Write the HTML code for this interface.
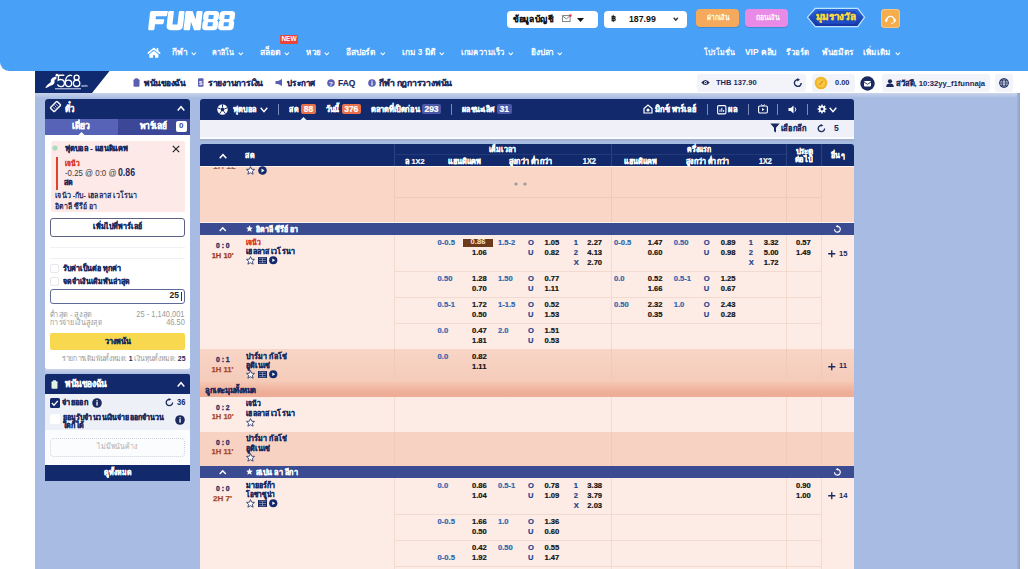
<!DOCTYPE html>
<html><head><meta charset="utf-8"><style>
html,body{margin:0;padding:0;background:#fff;width:1028px;height:569px;overflow:hidden;position:relative;font-family:"Liberation Sans",sans-serif}
body>div,body>svg{position:absolute}
svg{overflow:visible}
</style></head><body>
<div style="left:0px;top:0px;width:1028px;height:70.6px;background:#49a1f7;border-radius:0 0 0 9px"></div>
<svg style="left:148px;top:10.8px" width="90" height="19.5" viewBox="0 0 90 19.5"><g transform="translate(2.2 0) skewX(-6.5)" fill="#fff"><path d="M1.5 0 H17 Q18 0 17.8 1 L17.3 4.3 Q17.1 5.3 16 5.3 H6.3 V8.3 H14.3 Q15.3 8.3 15.1 9.3 L14.7 12.3 Q14.5 13.3 13.5 13.3 H6.3 V17.8 Q6.3 19.2 5 19.2 H1.3 Q0 19.2 0 17.8 V1.5 Q0 0 1.5 0 Z"/><path d="M19.3 0 H22.8 Q23.8 0 23.8 1.2 V13.6 H28.8 V1.2 Q28.8 0 30 0 H33.3 Q34.5 0 34.5 1.2 V14.5 Q34.5 19.2 29.8 19.2 H23.8 Q18.1 19.2 18.1 14.5 V1.2 Q18.1 0 19.3 0 Z"/><path d="M36.6 0 H42.4 L46.4 8.5 V1.2 Q46.4 0 47.6 0 H51.3 Q52.5 0 52.5 1.2 V18 Q52.5 19.2 51.3 19.2 H46 L42 10.8 V18 Q42 19.2 40.8 19.2 H36.6 Q35.4 19.2 35.4 18 V1.2 Q35.4 0 36.6 0 Z"/><path fill-rule="evenodd" d="M57.5 0 H65.5 Q69.3 0 69.3 3.8 V7.3 Q69.3 9.3 67.8 9.6 Q69.3 9.9 69.3 11.9 V15.4 Q69.3 19.2 65.5 19.2 H57.5 Q53.7 19.2 53.7 15.4 V11.9 Q53.7 9.9 55.2 9.6 Q53.7 9.3 53.7 7.3 V3.8 Q53.7 0 57.5 0 Z M59 3.9 H64 V7.9 H59 Z M59 11.3 H64 V15.3 H59 Z"/><path fill-rule="evenodd" d="M73.5 0 H81.5 Q85.3 0 85.3 3.8 V7.3 Q85.3 9.3 83.8 9.6 Q85.3 9.9 85.3 11.9 V15.4 Q85.3 19.2 81.5 19.2 H73.5 Q69.7 19.2 69.7 15.4 V11.9 Q69.7 9.9 71.2 9.6 Q69.7 9.3 69.7 7.3 V3.8 Q69.7 0 73.5 0 Z M75 3.9 H80 V7.9 H75 Z M75 11.3 H80 V15.3 H75 Z"/></g></svg>
<div style="left:507px;top:11px;width:91px;height:17px;background:#fff;border-radius:4px"></div>
<div style="left:513.2px;top:13.55px;font-size:9px;line-height:11.70px;color:#111;font-weight:bold;white-space:nowrap;-webkit-text-stroke:0.1px currentColor;"><span id="t0" style="display:inline-block;transform:scale(0.937,0.981);transform-origin:left center;">ข้อมูลบัญชี</span></div>
<svg style="left:562px;top:14px" width="10" height="9" viewBox="0 0 10 9"><rect x="0.6" y="1.6" width="7.5" height="6" fill="none" stroke="#777" stroke-width="0.9"/><path d="M0.8 2 L4.3 5 L7.8 2" fill="none" stroke="#777" stroke-width="0.9"/><circle cx="8.4" cy="1.5" r="1.3" fill="#e33"/></svg>
<svg style="left:577px;top:17.5px" width="7" height="4" viewBox="0 0 7 4"><path d="M0 0 L7 0 L3.5 4 Z" fill="#111"/></svg>
<div style="left:604px;top:11px;width:83px;height:17px;background:#fff;border-radius:4px"></div>
<div style="left:611.3px;top:14.20px;font-size:8px;line-height:10.40px;color:#111;font-weight:bold;white-space:nowrap;"><span id="t1" style="">฿</span></div>
<div style="left:628.8px;top:13.55px;font-size:9px;line-height:11.70px;color:#111;font-weight:bold;white-space:nowrap;"><span id="t2" style="display:inline-block;transform:scale(0.973,1.0);transform-origin:left center;">187.99</span></div>
<svg style="left:672.8px;top:17.3px" width="5.5" height="3.6" viewBox="0 0 5.5 3.6"><path d="M0.7 0.7 L2.75 3.2 L4.8 0.7" fill="none" stroke="#333" stroke-width="1.4"/></svg>
<div style="left:696px;top:9px;width:43px;height:18px;background:#f4a95d;border-radius:4px;box-shadow:0 1px 1px rgba(0,0,0,.15)"></div>
<div style="left:567.6px;width:300px;text-align:center;top:12.80px;font-size:8px;line-height:10.40px;color:#fff;font-weight:bold;white-space:nowrap;"><span id="t3" style="display:inline-block;transform:scale(0.835,0.947);transform-origin:center center;">ฝากเงิน</span></div>
<div style="left:745px;top:9px;width:43px;height:18px;background:#e88ae6;border-radius:4px;box-shadow:0 1px 1px rgba(0,0,0,.15)"></div>
<div style="left:617px;width:300px;text-align:center;top:12.80px;font-size:8px;line-height:10.40px;color:#fff;font-weight:bold;white-space:nowrap;"><span id="t4" style="display:inline-block;transform:scale(0.870,0.959);transform-origin:center center;">ถอนเงิน</span></div>
<svg style="left:806px;top:7px" width="60" height="21" viewBox="0 0 60 21"><defs><linearGradient id="rg" x1="0" y1="0" x2="0" y2="1"><stop offset="0" stop-color="#2a6be0"/><stop offset="1" stop-color="#1532a0"/></linearGradient></defs><path d="M9 0.7 L52 0.7 L59.3 10.3 L52 20.3 L9 20.3 L0.7 10.3 Z" fill="#bfe6ff"/><path d="M9.6 1.9 L51.4 1.9 L57.8 10.3 L51.4 19.1 L9.6 19.1 L2.2 10.3 Z" fill="url(#rg)"/><path d="M12 4 L49 4 L53 10.3 L49 16.8 L12 16.8 L7 10.3 Z" fill="#1e4cc4"/></svg>
<div style="left:686.3px;width:300px;text-align:center;top:11.12px;font-size:9.5px;line-height:12.35px;color:#f4d84e;font-weight:bold;white-space:nowrap;-webkit-text-stroke:0.25px currentColor;text-shadow:0 0 1px #5a3d00"><span id="t5" style="display:inline-block;transform:scale(1.053,1.0);transform-origin:center center;">มุมรางวัล</span></div>
<div style="left:881.2px;top:9.1px;width:18.5px;height:19px;background:#f5ad4e;border-radius:4px;box-shadow:inset 0 0 0 1px #f9c57e"></div>
<svg style="left:884px;top:12px" width="13" height="13" viewBox="0 0 13 13"><path d="M2.6 8.2 A3.9 3.9 0 1 1 10.4 8.2" fill="none" stroke="#fff" stroke-width="1.3"/><rect x="1.3" y="6.8" width="2" height="3.2" rx="0.8" fill="#fff"/><rect x="9.7" y="6.8" width="2" height="3.2" rx="0.8" fill="#fff"/><path d="M10.6 9.8 Q10.2 11.4 7 11.4" fill="none" stroke="#fff" stroke-width="0.9"/></svg>
<svg style="left:147px;top:47px" width="14" height="12" viewBox="0 0 14 12"><path d="M1.2 6.1 L6.8 1.5 L12.7 6.1" fill="none" stroke="#fff" stroke-width="1.6" stroke-linecap="round" stroke-linejoin="round"/><rect x="9.8" y="1" width="1.5" height="3" fill="#fff"/><path d="M2.3 7.3 L6.8 3.7 L11.4 7.3 V10.7 H8 V8.2 H6 V10.7 H2.3 Z" fill="#fff"/></svg>
<div style="left:172px;top:47.41px;font-size:8.6px;line-height:11.18px;color:#fff;font-weight:bold;white-space:nowrap;"><span id="t6" style="display:inline-block;transform:scale(0.981,0.994);transform-origin:left center;">กีฬา</span></div>
<svg style="left:191px;top:51.6px" width="5.6" height="3.2" viewBox="0 0 5.6 3.2"><path d="M0.7 0.7 L2.8 2.8000000000000003 L4.8999999999999995 0.7" fill="none" stroke="#fff" stroke-width="1.1"/></svg>
<div style="left:212.4px;top:47.41px;font-size:8.6px;line-height:11.18px;color:#fff;font-weight:bold;white-space:nowrap;"><span id="t7" style="display:inline-block;transform:scale(0.826,0.944);transform-origin:left center;">คาสิโน</span></div>
<svg style="left:238.2px;top:51.6px" width="5.6" height="3.2" viewBox="0 0 5.6 3.2"><path d="M0.7 0.7 L2.8 2.8000000000000003 L4.8999999999999995 0.7" fill="none" stroke="#fff" stroke-width="1.1"/></svg>
<div style="left:259.6px;top:47.41px;font-size:8.6px;line-height:11.18px;color:#fff;font-weight:bold;white-space:nowrap;"><span id="t8" style="">สล็อต</span></div>
<svg style="left:284.4px;top:51.6px" width="5.6" height="3.2" viewBox="0 0 5.6 3.2"><path d="M0.7 0.7 L2.8 2.8000000000000003 L4.8999999999999995 0.7" fill="none" stroke="#fff" stroke-width="1.1"/></svg>
<div style="left:305.8px;top:47.41px;font-size:8.6px;line-height:11.18px;color:#fff;font-weight:bold;white-space:nowrap;"><span id="t9" style="display:inline-block;transform:scale(0.925,0.977);transform-origin:left center;">หวย</span></div>
<svg style="left:324.4px;top:51.6px" width="5.6" height="3.2" viewBox="0 0 5.6 3.2"><path d="M0.7 0.7 L2.8 2.8000000000000003 L4.8999999999999995 0.7" fill="none" stroke="#fff" stroke-width="1.1"/></svg>
<div style="left:345.8px;top:47.41px;font-size:8.6px;line-height:11.18px;color:#fff;font-weight:bold;white-space:nowrap;"><span id="t10" style="display:inline-block;transform:scale(0.974,0.992);transform-origin:left center;">อีสปอร์ต</span></div>
<svg style="left:379.9px;top:51.6px" width="5.6" height="3.2" viewBox="0 0 5.6 3.2"><path d="M0.7 0.7 L2.8 2.8000000000000003 L4.8999999999999995 0.7" fill="none" stroke="#fff" stroke-width="1.1"/></svg>
<div style="left:402px;top:47.41px;font-size:8.6px;line-height:11.18px;color:#fff;font-weight:bold;white-space:nowrap;"><span id="t11" style="display:inline-block;transform:scale(0.956,0.987);transform-origin:left center;">เกม 3 มิติ</span></div>
<svg style="left:439.2px;top:51.6px" width="5.6" height="3.2" viewBox="0 0 5.6 3.2"><path d="M0.7 0.7 L2.8 2.8000000000000003 L4.8999999999999995 0.7" fill="none" stroke="#fff" stroke-width="1.1"/></svg>
<div style="left:461px;top:47.41px;font-size:8.6px;line-height:11.18px;color:#fff;font-weight:bold;white-space:nowrap;"><span id="t12" style="display:inline-block;transform:scale(0.892,0.966);transform-origin:left center;">เกมความเร็ว</span></div>
<svg style="left:508.2px;top:51.6px" width="5.6" height="3.2" viewBox="0 0 5.6 3.2"><path d="M0.7 0.7 L2.8 2.8000000000000003 L4.8999999999999995 0.7" fill="none" stroke="#fff" stroke-width="1.1"/></svg>
<div style="left:530.7px;top:47.41px;font-size:8.6px;line-height:11.18px;color:#fff;font-weight:bold;white-space:nowrap;"><span id="t13" style="display:inline-block;transform:scale(0.971,0.991);transform-origin:left center;">ยิงปลา</span></div>
<svg style="left:557px;top:51.6px" width="5.6" height="3.2" viewBox="0 0 5.6 3.2"><path d="M0.7 0.7 L2.8 2.8000000000000003 L4.8999999999999995 0.7" fill="none" stroke="#fff" stroke-width="1.1"/></svg>
<div style="left:280px;top:35px;width:18px;height:9px;background:#e8463c;border-radius:1px"></div>
<div style="left:139px;width:300px;text-align:center;top:35.48px;font-size:6.5px;line-height:8.45px;color:#fff;font-weight:bold;white-space:nowrap;"><span id="t14" style="">NEW</span></div>
<div style="left:704px;top:47.41px;font-size:8.6px;line-height:11.18px;color:#fff;font-weight:bold;white-space:nowrap;"><span id="t15" style="display:inline-block;transform:scale(0.816,0.941);transform-origin:left center;">โปรโมชั่น</span></div>
<div style="left:744.6px;top:47.41px;font-size:8.6px;line-height:11.18px;color:#fff;font-weight:bold;white-space:nowrap;"><span id="t16" style="display:inline-block;transform:scale(0.978,0.993);transform-origin:left center;">VIP คลับ</span></div>
<div style="left:786px;top:47.41px;font-size:8.6px;line-height:11.18px;color:#fff;font-weight:bold;white-space:nowrap;"><span id="t17" style="display:inline-block;transform:scale(0.904,0.97);transform-origin:left center;">รีวอร์ด</span></div>
<div style="left:821.7px;top:47.41px;font-size:8.6px;line-height:11.18px;color:#fff;font-weight:bold;white-space:nowrap;"><span id="t18" style="display:inline-block;transform:scale(0.944,0.983);transform-origin:left center;">พันธมิตร</span></div>
<div style="left:863.4px;top:47.41px;font-size:8.6px;line-height:11.18px;color:#fff;font-weight:bold;white-space:nowrap;"><span id="t19" style="display:inline-block;transform:scale(0.920,0.975);transform-origin:left center;">เพิ่มเติม</span></div>
<svg style="left:894.5px;top:51.6px" width="5.6" height="3.2" viewBox="0 0 5.6 3.2"><path d="M0.7 0.7 L2.8 2.8000000000000003 L4.8999999999999995 0.7" fill="none" stroke="#fff" stroke-width="1.1"/></svg>
<div style="left:35px;top:71px;width:984px;height:22px;background:#fff;"></div>
<svg style="left:35px;top:71px" width="75" height="22" viewBox="0 0 75 22"><path d="M0 0 L74.5 0 L57 22 L0 22 Z" fill="#0f2a6e"/></svg>
<svg style="left:44px;top:73px" width="50" height="18" viewBox="0 0 50 18"><path d="M1.2 14.8 Q3.5 11.2 6.8 9 Q6 6.5 8.5 4.8 L11.8 3.4 Q13.3 4.4 12.2 6 L10.6 7 Q11.2 9.8 9 11.8 Q6 12.8 2.8 14.8 Z" fill="#fff"/><circle cx="12.9" cy="2.2" r="1.35" fill="#fff"/><g fill="none" stroke="#fff" stroke-width="1.35" stroke-linecap="round"><path d="M19.8 2.2 H14.8 L14.2 7.2 Q15.6 6.3 17 6.5 Q20.4 6.9 20.4 10.1 Q20.4 13.6 17 13.6 Q14.6 13.6 13.7 11.9"/><path d="M27.6 2.6 Q25.8 1.9 24.3 2.8 Q21.3 4.8 21.3 9.8 Q21.3 13.6 24.5 13.6 Q27.7 13.6 27.7 10.3 Q27.7 7.1 24.5 7.1 Q22.1 7.1 21.4 9"/><circle cx="32.6" cy="4.6" r="2.5"/><circle cx="32.6" cy="10.3" r="3.2"/></g><text x="37.3" y="13.6" font-family="Liberation Sans" font-size="4.3" fill="#fff">win</text><rect x="11" y="15.2" width="26" height="1.1" fill="#c9d0e6"/></svg>
<svg style="left:133px;top:78px" width="7" height="9" viewBox="0 0 7 9"><rect x="0.5" y="1.2" width="6" height="7.5" rx="1" fill="#5b5fb4"/><rect x="2" y="0.3" width="3" height="1.8" fill="#5b5fb4"/></svg>
<div style="left:143.5px;top:77.65px;font-size:9px;line-height:11.70px;color:#1b2a5e;font-weight:bold;white-space:nowrap;-webkit-text-stroke:0.15px currentColor;"><span id="t20" style="display:inline-block;transform:scale(0.922,0.976);transform-origin:left center;">พนันของฉัน</span></div>
<svg style="left:198px;top:78px" width="6" height="9" viewBox="0 0 6 9"><rect x="0" y="0.3" width="5.5" height="8.4" rx="1" fill="#5b5fb4"/><text x="2.75" y="7" font-size="6" fill="#fff" text-anchor="middle" font-family="Liberation Sans" font-weight="bold">$</text></svg>
<div style="left:208px;top:77.65px;font-size:9px;line-height:11.70px;color:#1b2a5e;font-weight:bold;white-space:nowrap;-webkit-text-stroke:0.15px currentColor;"><span id="t21" style="display:inline-block;transform:scale(0.948,0.984);transform-origin:left center;">รายงานการเงิน</span></div>
<svg style="left:275px;top:79px" width="9" height="7" viewBox="0 0 9 7"><path d="M0.5 2 L3 2 L7 0 L7 7 L3 5 L0.5 5 Z" fill="#5b5fb4"/></svg>
<div style="left:286.5px;top:77.65px;font-size:9px;line-height:11.70px;color:#1b2a5e;font-weight:bold;white-space:nowrap;-webkit-text-stroke:0.15px currentColor;"><span id="t22" style="display:inline-block;transform:scale(0.881,0.963);transform-origin:left center;">ประกาศ</span></div>
<svg style="left:327px;top:79px" width="8" height="8" viewBox="0 0 8 8"><circle cx="4" cy="4" r="3.8" fill="#5b5fb4"/><text x="4" y="6.6" font-size="6.2" fill="#fff" text-anchor="middle" font-family="Liberation Sans" font-weight="bold">?</text></svg>
<div style="left:338.4px;top:78.11px;font-size:8.3px;line-height:10.79px;color:#1b2a5e;font-weight:bold;white-space:nowrap;-webkit-text-stroke:0.15px currentColor;"><span id="t23" style="display:inline-block;transform:scale(1.014,1.0);transform-origin:left center;">FAQ</span></div>
<svg style="left:368px;top:79px" width="8" height="8" viewBox="0 0 8 8"><circle cx="4" cy="4" r="3.8" fill="#5b5fb4"/><rect x="3.4" y="3.2" width="1.2" height="3.2" fill="#fff"/><rect x="3.4" y="1.6" width="1.2" height="1.1" fill="#fff"/></svg>
<div style="left:378.9px;top:77.65px;font-size:9px;line-height:11.70px;color:#1b2a5e;font-weight:bold;white-space:nowrap;-webkit-text-stroke:0.15px currentColor;"><span id="t24" style="display:inline-block;transform:scale(0.955,0.986);transform-origin:left center;">กีฬา กฎการวางพนัน</span></div>
<div style="left:697px;top:74px;width:109px;height:17.5px;background:#f3f4fa;border-radius:3px"></div>
<svg style="left:701px;top:79px" width="9" height="7" viewBox="0 0 9 7"><path d="M0.3 3.5 Q4.5 -1.5 8.7 3.5 Q4.5 8.5 0.3 3.5 Z" fill="#1b2a5e"/><circle cx="4.5" cy="3.5" r="1.5" fill="#fff"/><circle cx="4.5" cy="3.5" r="0.8" fill="#1b2a5e"/></svg>
<div style="left:716.4px;top:77.60px;font-size:8px;line-height:10.40px;color:#1b2a5e;font-weight:bold;white-space:nowrap;"><span id="t25" style="display:inline-block;transform:scale(0.941,1.0);transform-origin:left center;">THB 137.90</span></div>
<svg style="left:793px;top:78px" width="10" height="10" viewBox="0 0 10 10"><path d="M8.2 5 A3.4 3.4 0 1 1 5 1.6" fill="none" stroke="#1b2a5e" stroke-width="1.4"/><path d="M4.2 0 L7 1.7 L4.2 3.4 Z" fill="#1b2a5e"/></svg>
<div style="left:812px;top:74px;width:43px;height:17.5px;background:#f3f4fa;border-radius:3px"></div>
<svg style="left:814px;top:76px" width="14" height="14" viewBox="0 0 14 14"><circle cx="7" cy="7" r="6.3" fill="#f1b526"/><circle cx="7" cy="7" r="4.2" fill="#f7c846"/><path d="M5 9 L9 5" stroke="#e39a10" stroke-width="1.2"/></svg>
<div style="left:835px;top:77.60px;font-size:8px;line-height:10.40px;color:#1b2a5e;font-weight:bold;white-space:nowrap;"><span id="t26" style="display:inline-block;transform:scale(0.931,1.0);transform-origin:left center;">0.00</span></div>
<svg style="left:860px;top:76px" width="15" height="15" viewBox="0 0 15 15"><circle cx="7.5" cy="7.5" r="7.2" fill="#1b2a5e"/><rect x="4" y="5" width="7" height="5.5" rx="1" fill="#fff"/><path d="M4 6 L7.5 8.3 L11 6" fill="none" stroke="#1b2a5e" stroke-width="0.9"/></svg>
<div style="left:882px;top:74px;width:108px;height:17.5px;background:#f3f4fa;border-radius:3px"></div>
<svg style="left:886px;top:78.5px" width="8" height="8" viewBox="0 0 8 8"><circle cx="4" cy="2.3" r="2.1" fill="#1b2a5e"/><path d="M0.2 8 Q0.2 4.6 4 4.6 Q7.8 4.6 7.8 8 Z" fill="#1b2a5e"/></svg>
<div style="left:896px;top:77.61px;font-size:8.3px;line-height:10.79px;color:#1b2a5e;font-weight:bold;white-space:nowrap;-webkit-text-stroke:0.05px currentColor;"><span id="t27" style="display:inline-block;transform:scale(0.922,0.976);transform-origin:left center;">สวัสดี, 10:32yy_f1funnaja</span></div>
<div style="left:995px;top:74px;width:18px;height:17.5px;background:#f3f4fa;border-radius:3px"></div>
<svg style="left:999px;top:78px" width="10" height="10" viewBox="0 0 10 10"><circle cx="5" cy="5" r="4.3" fill="none" stroke="#1b2a5e" stroke-width="1.1"/><ellipse cx="5" cy="5" rx="2" ry="4.3" fill="none" stroke="#1b2a5e" stroke-width="0.9"/><path d="M0.7 5 L9.3 5 M1.5 2.8 L8.5 2.8 M1.5 7.2 L8.5 7.2" stroke="#1b2a5e" stroke-width="0.8"/></svg>
<div style="left:35px;top:93px;width:985px;height:476px;background:#a8bbe2;"></div>
<div style="left:35px;top:93px;width:985px;height:5px;background:#c8d2e8;background:linear-gradient(#c9d4ea,#a9bce3)"></div>
<div style="left:1016.5px;top:93px;width:3.5px;height:476px;background:#93a7cf;background:linear-gradient(90deg,#a3b5da,#8d9fc2)"></div>
<div style="left:45px;top:98.5px;width:145px;height:270px;background:#fff;border-radius:3px 3px 2px 2px"></div>
<div style="left:45px;top:98.5px;width:145px;height:20px;background:#122a6b;border-radius:3px 3px 0 0"></div>
<svg style="left:49.5px;top:101px" width="11" height="11" viewBox="0 0 11 11"><g transform="rotate(45 5.5 5.5)"><rect x="2.7" y="0.8" width="5.6" height="9.4" rx="0.8" fill="none" stroke="#fff" stroke-width="1.4"/><path d="M4.3 3.5 L6.7 3.5 M4.3 5.5 L6.7 5.5 M4.3 7.5 L6.7 7.5" stroke="#fff" stroke-width="0.7"/></g></svg>
<div style="left:65px;top:101.67px;font-size:10.5px;line-height:13.65px;color:#fff;font-weight:bold;white-space:nowrap;-webkit-text-stroke:0.25px currentColor;"><span id="t28" style="display:inline-block;transform:scale(0.746,0.916);transform-origin:left center;">ตั๋ว</span></div>
<svg style="left:177px;top:106px" width="8" height="4.6" viewBox="0 0 8 4.6"><path d="M0.7 4.3999999999999995 L4.0 0.7 L7.3 4.3999999999999995" fill="none" stroke="#fff" stroke-width="1.5"/></svg>
<div style="left:45px;top:118.5px;width:73px;height:16px;background:#5663b6;"></div>
<div style="left:118px;top:118.5px;width:72px;height:16px;background:#3c4897;"></div>
<div style="left:-69.15px;width:300px;text-align:center;top:120.33px;font-size:9.5px;line-height:12.35px;color:#fff;font-weight:bold;white-space:nowrap;-webkit-text-stroke:0.25px currentColor;"><span id="t29" style="display:inline-block;transform:scale(0.895,0.967);transform-origin:center center;">เดี่ยว</span></div>
<div style="left:140px;top:120.33px;font-size:9.5px;line-height:12.35px;color:#fff;font-weight:bold;white-space:nowrap;-webkit-text-stroke:0.25px currentColor;"><span id="t30" style="display:inline-block;transform:scale(0.884,0.964);transform-origin:left center;">พาร์เลย์</span></div>
<div style="left:176px;top:121px;width:10.5px;height:11px;background:#fff;border-radius:2px"></div>
<div style="left:31.25px;width:300px;text-align:center;top:121.30px;font-size:8px;line-height:10.40px;color:#3c4897;font-weight:bold;white-space:nowrap;"><span id="t31" style="">0</span></div>
<svg style="left:78px;top:131.5px" width="7" height="3.5" viewBox="0 0 7 3.5"><path d="M0 3.5 L3.5 0 L7 3.5 Z" fill="#fff"/></svg>
<div style="left:50.5px;top:141px;width:134px;height:71px;background:#fde9e7;border-radius:2px"></div>
<svg style="left:52px;top:145px" width="6" height="6" viewBox="0 0 6 6"><circle cx="3" cy="3" r="2.6" fill="#a8dcb8"/></svg>
<div style="left:65px;top:143.20px;font-size:8.3px;line-height:10.79px;color:#1b2a5e;font-weight:bold;white-space:nowrap;-webkit-text-stroke:0.25px currentColor;"><span id="t32" style="display:inline-block;transform:scale(0.888,0.965);transform-origin:left center;">ฟุตบอล - แฮนดิแคพ</span></div>
<svg style="left:172px;top:145px" width="8" height="8" viewBox="0 0 8 8"><path d="M0.8 0.8 L7.2 7.2 M7.2 0.8 L0.8 7.2" stroke="#222" stroke-width="1.2"/></svg>
<div style="left:56px;top:157px;width:2.2px;height:32.5px;background:#d9452b;"></div>
<div style="left:65px;top:158.17px;font-size:8.5px;line-height:11.05px;color:#d9402b;font-weight:bold;white-space:nowrap;-webkit-text-stroke:0.25px currentColor;"><span id="t33" style="display:inline-block;transform:scale(0.763,0.922);transform-origin:left center;">เจนัว</span></div>
<div style="left:65px;top:168.28px;font-size:8.5px;line-height:11.05px;color:#3a3a3a;font-weight:normal;white-space:nowrap;"><span id="t34" style="display:inline-block;transform:scale(0.925,1.0);transform-origin:left center;">-0.25 @ 0:0 @</span></div>
<div style="left:118.4px;top:166.48px;font-size:10.5px;line-height:13.65px;color:#1b2a5e;font-weight:bold;white-space:nowrap;"><span id="t35" style="display:inline-block;transform:scale(0.832,1.0);transform-origin:left center;">0.86</span></div>
<div style="left:63.9px;top:178.00px;font-size:8px;line-height:10.40px;color:#1b2a5e;font-weight:bold;white-space:nowrap;-webkit-text-stroke:0.25px currentColor;"><span id="t36" style="display:inline-block;transform:scale(0.880,0.962);transform-origin:left center;">สด</span></div>
<div style="left:54.7px;top:190.38px;font-size:8.5px;line-height:11.05px;color:#1b2a5e;font-weight:bold;white-space:nowrap;"><span id="t37" style="display:inline-block;transform:scale(0.833,0.947);transform-origin:left center;">เจนัว -กับ- เฮลลาส เวโรนา</span></div>
<div style="left:54.7px;top:200.88px;font-size:8.5px;line-height:11.05px;color:#1b2a5e;font-weight:bold;white-space:nowrap;"><span id="t38" style="display:inline-block;transform:scale(0.823,0.943);transform-origin:left center;">อิตาลี ซีรีย์ อา</span></div>
<div style="left:49.5px;top:217.5px;width:135.5px;height:19px;background:#fff;border:1px solid #5d6283;border-radius:3px;box-sizing:border-box"></div>
<div style="left:-32.55px;width:300px;text-align:center;top:221.47px;font-size:8.5px;line-height:11.05px;color:#1b2a5e;font-weight:bold;white-space:nowrap;-webkit-text-stroke:0.25px currentColor;"><span id="t39" style="display:inline-block;transform:scale(0.829,0.945);transform-origin:center center;">เพิ่มไปที่พาร์เลย์</span></div>
<div style="left:49.5px;top:247px;width:135.5px;height:1px;background:#eef0f5;"></div>
<div style="left:49.5px;top:257.5px;width:135.5px;height:1px;background:#eef0f5;"></div>
<div style="left:50px;top:264px;width:9px;height:9px;background:#fff;border:1px solid #e6e8ee;border-radius:2px;box-sizing:border-box"></div>
<div style="left:62.6px;top:262.88px;font-size:8.5px;line-height:11.05px;color:#1b2a5e;font-weight:bold;white-space:nowrap;-webkit-text-stroke:0.25px currentColor;"><span id="t40" style="display:inline-block;transform:scale(0.833,0.947);transform-origin:left center;">รับค่าเป็นต่อ ทุกค่า</span></div>
<div style="left:50px;top:277px;width:9px;height:9px;background:#fff;border:1px solid #e6e8ee;border-radius:2px;box-sizing:border-box"></div>
<div style="left:62.6px;top:275.58px;font-size:8.5px;line-height:11.05px;color:#1b2a5e;font-weight:bold;white-space:nowrap;-webkit-text-stroke:0.25px currentColor;"><span id="t41" style="display:inline-block;transform:scale(0.812,0.94);transform-origin:left center;">จดจำเงินเดิมพันล่าสุด</span></div>
<div style="left:49.5px;top:288.5px;width:135.5px;height:15px;background:#fff;border:1px solid #5d6a9a;border-radius:3px;box-sizing:border-box"></div>
<div style="left:-121px;width:300px;text-align:right;top:290.48px;font-size:8.5px;line-height:11.05px;color:#222;font-weight:bold;white-space:nowrap;"><span id="t42" style="">25</span></div>
<div style="left:180.5px;top:291.5px;width:0.8px;height:9px;background:#333;"></div>
<div style="left:50px;top:308.81px;font-size:8.3px;line-height:10.79px;color:#9a9a9a;font-weight:normal;white-space:nowrap;"><span id="t43" style="display:inline-block;transform:scale(0.895,0.967);transform-origin:left center;">ต่ำสุด - สูงสุด</span></div>
<div style="left:-115.4px;width:300px;text-align:right;top:308.81px;font-size:8.3px;line-height:10.79px;color:#9a9a9a;font-weight:normal;white-space:nowrap;"><span id="t44" style="display:inline-block;transform:scale(0.901,1.0);transform-origin:right center;">25 - 1,140,001</span></div>
<div style="left:50px;top:317.31px;font-size:8.3px;line-height:10.79px;color:#9a9a9a;font-weight:normal;white-space:nowrap;"><span id="t45" style="display:inline-block;transform:scale(0.852,0.953);transform-origin:left center;">การจ่ายเงินสูงสุด</span></div>
<div style="left:-115.4px;width:300px;text-align:right;top:317.31px;font-size:8.3px;line-height:10.79px;color:#9a9a9a;font-weight:normal;white-space:nowrap;"><span id="t46" style="display:inline-block;transform:scale(0.896,1.0);transform-origin:right center;">46.50</span></div>
<div style="left:49.5px;top:333px;width:135.5px;height:17px;background:#f8d84e;border-radius:2px"></div>
<div style="left:-32.349999999999994px;width:300px;text-align:center;top:335.75px;font-size:9px;line-height:11.70px;color:#1b2a5e;font-weight:bold;white-space:nowrap;-webkit-text-stroke:0.25px currentColor;"><span id="t47" style="display:inline-block;transform:scale(0.791,0.932);transform-origin:center center;">วางพนัน</span></div>
<div style="left:-115px;width:300px;text-align:right;top:354.10px;font-size:8px;line-height:10.40px;color:#9a9a9a;font-weight:normal;white-space:nowrap;"><span id="t48" style="display:inline-block;transform:scale(0.860,0.956);transform-origin:right center;">รายการเดิมพันทั้งหมด: <b style="color:#1b2a5e">1</b> เงินทุนทั้งหมด: <b style="color:#1b2a5e">25</b></span></div>
<div style="left:45px;top:368.5px;width:145px;height:5.5px;background:#c9d2e8;background:linear-gradient(#cdd5ea,#aabde3)"></div>
<div style="left:45px;top:374.2px;width:145px;height:19.6px;background:#122a6b;border-radius:2px 2px 0 0"></div>
<svg style="left:51px;top:379.5px" width="7" height="9" viewBox="0 0 7 9"><rect x="0.5" y="1.2" width="6" height="7.5" rx="1" fill="#e3f0e3"/><rect x="2" y="0.3" width="3" height="1.8" fill="#e3f0e3"/></svg>
<div style="left:64.7px;top:377.48px;font-size:10.5px;line-height:13.65px;color:#fff;font-weight:bold;white-space:nowrap;-webkit-text-stroke:0.25px currentColor;"><span id="t49" style="display:inline-block;transform:scale(0.791,0.932);transform-origin:left center;">พนันของฉัน</span></div>
<svg style="left:177px;top:382px" width="8" height="4.6" viewBox="0 0 8 4.6"><path d="M0.7 4.3999999999999995 L4.0 0.7 L7.3 4.3999999999999995" fill="none" stroke="#fff" stroke-width="1.5"/></svg>
<div style="left:45px;top:394px;width:145px;height:36px;background:#eef0f8;"></div>
<div style="left:45px;top:430px;width:145px;height:35px;background:#fbfcfe;"></div>
<div style="left:49.8px;top:398px;width:9.8px;height:9.8px;background:#122a6b;border-radius:1.5px"></div>
<svg style="left:51px;top:400px" width="7.5" height="6" viewBox="0 0 7.5 6"><path d="M0.8 3 L3 5.2 L6.8 0.8" fill="none" stroke="#fff" stroke-width="1.3"/></svg>
<div style="left:62.2px;top:397.08px;font-size:8.5px;line-height:11.05px;color:#1b2a5e;font-weight:bold;white-space:nowrap;-webkit-text-stroke:0.25px currentColor;"><span id="t50" style="display:inline-block;transform:scale(0.860,0.956);transform-origin:left center;">จ่ายออก</span></div>
<svg style="left:91.5px;top:397.5px" width="10" height="10" viewBox="0 0 10 10"><circle cx="5" cy="5" r="4.8" fill="#1b2a5e"/><rect x="4.4" y="4" width="1.3" height="3.6" fill="#fff"/><rect x="4.4" y="2.2" width="1.3" height="1.2" fill="#fff"/></svg>
<svg style="left:165px;top:398px" width="9" height="9" viewBox="0 0 9 9"><path d="M7.6 4.5 A3.2 3.2 0 1 1 4.5 1.3" fill="none" stroke="#1b2a5e" stroke-width="1.3"/><path d="M3.7 0 L6.4 1.4 L3.7 2.8 Z" fill="#1b2a5e"/></svg>
<div style="left:176.9px;top:397.08px;font-size:8.5px;line-height:11.05px;color:#1b2a5e;font-weight:bold;white-space:nowrap;"><span id="t51" style="display:inline-block;transform:scale(0.887,1.0);transform-origin:left center;">36</span></div>
<div style="left:50px;top:414px;width:9.5px;height:9.5px;background:#fff;border-radius:2px"></div>
<div style="left:62.6px;top:413.00px;font-size:8.5px;line-height:8.00px;color:#1b2a5e;font-weight:bold;white-space:nowrap;-webkit-text-stroke:0.25px currentColor;"><span id="t52" style="display:inline-block;transform:scale(0.821,0.943);transform-origin:left center;">ยอมรับจำนวนเงินจ่ายออกจำนวน</span></div>
<div style="left:62.6px;top:420.50px;font-size:8.5px;line-height:8.00px;color:#1b2a5e;font-weight:bold;white-space:nowrap;-webkit-text-stroke:0.25px currentColor;"><span id="t53" style="display:inline-block;transform:scale(0.848,0.952);transform-origin:left center;">ใดก็ได้</span></div>
<svg style="left:174.5px;top:414.5px" width="10" height="10" viewBox="0 0 10 10"><circle cx="5" cy="5" r="4.8" fill="#1b2a5e"/><rect x="4.4" y="4" width="1.3" height="3.6" fill="#fff"/><rect x="4.4" y="2.2" width="1.3" height="1.2" fill="#fff"/></svg>
<div style="left:49.8px;top:437.8px;width:135.7px;height:19px;background:transparent;border:1.2px dotted #cfd2da;border-radius:4px;box-sizing:border-box"></div>
<div style="left:-32.849999999999994px;width:300px;text-align:center;top:441.08px;font-size:8.5px;line-height:11.05px;color:#b0b0b0;font-weight:normal;white-space:nowrap;"><span id="t54" style="display:inline-block;transform:scale(0.822,0.943);transform-origin:center center;">ไม่มีพนันค้าง</span></div>
<div style="left:45px;top:464.5px;width:145px;height:16px;background:#122a6b;"></div>
<div style="left:-32.349999999999994px;width:300px;text-align:center;top:467.48px;font-size:8.5px;line-height:11.05px;color:#fff;font-weight:bold;white-space:nowrap;-webkit-text-stroke:0.25px currentColor;"><span id="t55" style="display:inline-block;transform:scale(0.815,0.94);transform-origin:center center;">ดูทั้งหมด</span></div>
<div style="left:200px;top:98.5px;width:654px;height:21px;background:#122a6b;border-radius:3px 3px 0 0"></div>
<div style="left:200px;top:119.5px;width:654px;height:18.5px;background:#f0f0f8;"></div>
<div style="left:200px;top:137px;width:654px;height:1.6px;background:#fbfcff;"></div>
<div style="left:200px;top:138.6px;width:654px;height:2.8px;background:#a4b2d0;"></div>
<svg style="left:217px;top:103.5px" width="11" height="11" viewBox="0 0 11 11"><circle cx="5.5" cy="5.5" r="5.2" fill="#fff"/><path d="M5.5 3.3 L7.6 4.8 L6.8 7.3 L4.2 7.3 L3.4 4.8 Z" fill="#122a6b"/><path d="M5.5 0.3 L5.5 3.3 M7.6 4.8 L10.4 3.8 M6.8 7.3 L8.5 9.8 M4.2 7.3 L2.5 9.8 M3.4 4.8 L0.6 3.8" stroke="#122a6b" stroke-width="1"/></svg>
<div style="left:233px;top:102.83px;font-size:9.5px;line-height:12.35px;color:#fff;font-weight:bold;white-space:nowrap;-webkit-text-stroke:0.25px currentColor;"><span id="t56" style="display:inline-block;transform:scale(0.774,0.926);transform-origin:left center;">ฟุตบอล</span></div>
<svg style="left:260px;top:106.5px" width="8" height="5" viewBox="0 0 8 5"><path d="M0.7 0.7 L4.0 4.6 L7.3 0.7" fill="none" stroke="#fff" stroke-width="1.4"/></svg>
<div style="left:278.2px;top:104px;width:1px;height:10.5px;background:#7d8bb8;"></div>
<div style="left:289px;top:102.83px;font-size:9.5px;line-height:12.35px;color:#fff;font-weight:bold;white-space:nowrap;-webkit-text-stroke:0.25px currentColor;"><span id="t57" style="display:inline-block;transform:scale(0.750,0.917);transform-origin:left center;">สด</span></div>
<div style="left:301px;top:103.8px;width:15px;height:10.7px;background:#e8714b;border-radius:2px"></div>
<div style="left:158.5px;width:300px;text-align:center;top:103.67px;font-size:8.5px;line-height:11.05px;color:#fff;font-weight:bold;white-space:nowrap;-webkit-text-stroke:0.2px currentColor;"><span id="t58" style="">88</span></div>
<div style="left:326.4px;top:102.83px;font-size:9.5px;line-height:12.35px;color:#fff;font-weight:bold;white-space:nowrap;-webkit-text-stroke:0.25px currentColor;"><span id="t59" style="display:inline-block;transform:scale(0.741,0.914);transform-origin:left center;">วันนี้</span></div>
<div style="left:342px;top:103.8px;width:18.5px;height:10.7px;background:#e8714b;border-radius:2px"></div>
<div style="left:201.25px;width:300px;text-align:center;top:103.67px;font-size:8.5px;line-height:11.05px;color:#fff;font-weight:bold;white-space:nowrap;-webkit-text-stroke:0.2px currentColor;"><span id="t60" style="">376</span></div>
<div style="left:370.7px;top:102.83px;font-size:9.5px;line-height:12.35px;color:#fff;font-weight:bold;white-space:nowrap;-webkit-text-stroke:0.25px currentColor;"><span id="t61" style="display:inline-block;transform:scale(0.784,0.93);transform-origin:left center;">ตลาดที่เปิดก่อน</span></div>
<div style="left:422.3px;top:103.8px;width:18.4px;height:10.7px;background:#4b59a8;border-radius:2px"></div>
<div style="left:281.5px;width:300px;text-align:center;top:103.67px;font-size:8.5px;line-height:11.05px;color:#fff;font-weight:bold;white-space:nowrap;-webkit-text-stroke:0.2px currentColor;"><span id="t62" style="">293</span></div>
<div style="left:451px;top:104px;width:1px;height:10.5px;background:#7d8bb8;"></div>
<div style="left:461.6px;top:102.83px;font-size:9.5px;line-height:12.35px;color:#fff;font-weight:bold;white-space:nowrap;-webkit-text-stroke:0.25px currentColor;"><span id="t63" style="display:inline-block;transform:scale(0.736,0.912);transform-origin:left center;">ผลชนะเลิศ</span></div>
<div style="left:497px;top:103.8px;width:14.7px;height:10.7px;background:#4b59a8;border-radius:2px"></div>
<div style="left:354.35px;width:300px;text-align:center;top:103.67px;font-size:8.5px;line-height:11.05px;color:#fff;font-weight:bold;white-space:nowrap;-webkit-text-stroke:0.2px currentColor;"><span id="t64" style="">31</span></div>
<svg style="left:300px;top:116.5px" width="7" height="3.5" viewBox="0 0 7 3.5"><path d="M0 3.5 L3.5 0 L7 3.5 Z" fill="#eef1f9"/></svg>
<svg style="left:643px;top:104px" width="10" height="10" viewBox="0 0 10 10"><path d="M1 4.5 L5 1 L9 4.5 L9 9 L1 9 Z" fill="none" stroke="#fff" stroke-width="1.2"/><circle cx="5" cy="6" r="1.6" fill="#fff"/></svg>
<div style="left:655.4px;top:102.83px;font-size:9.5px;line-height:12.35px;color:#fff;font-weight:bold;white-space:nowrap;-webkit-text-stroke:0.25px currentColor;"><span id="t65" style="display:inline-block;transform:scale(0.800,0.935);transform-origin:left center;">มิกซ์ พาร์เลย์</span></div>
<div style="left:706.5px;top:104px;width:1px;height:10.5px;background:#7d8bb8;"></div>
<svg style="left:716.5px;top:104.5px" width="9.5" height="9.5" viewBox="0 0 9.5 9.5"><rect x="0.6" y="0.6" width="8.3" height="8.3" rx="1.2" fill="none" stroke="#fff" stroke-width="1.1"/><path d="M3 6.8 L3 4.5 M4.8 6.8 L4.8 3 M6.6 6.8 L6.6 5" stroke="#fff" stroke-width="1"/></svg>
<div style="left:727.8px;top:102.83px;font-size:9.5px;line-height:12.35px;color:#fff;font-weight:bold;white-space:nowrap;-webkit-text-stroke:0.25px currentColor;"><span id="t66" style="display:inline-block;transform:scale(0.800,0.935);transform-origin:left center;">ผล</span></div>
<div style="left:747.5px;top:104px;width:1px;height:10.5px;background:#7d8bb8;"></div>
<svg style="left:757.5px;top:104px" width="10" height="10" viewBox="0 0 10 10"><rect x="0.6" y="2" width="8.8" height="7" rx="1.2" fill="none" stroke="#fff" stroke-width="1.1"/><path d="M3 0.3 L5 2 L7 0.3" fill="none" stroke="#fff" stroke-width="0.8"/><path d="M4 4 L6.5 5.5 L4 7 Z" fill="#fff"/></svg>
<div style="left:777px;top:104px;width:1px;height:10.5px;background:#7d8bb8;"></div>
<svg style="left:787.5px;top:104.5px" width="9" height="9" viewBox="0 0 9 9"><path d="M0.5 3 L2.8 3 L5.5 0.5 L5.5 8.5 L2.8 6 L0.5 6 Z" fill="#fff"/><path d="M7 2.5 Q8.5 4.5 7 6.5" fill="none" stroke="#fff" stroke-width="1"/></svg>
<div style="left:806.5px;top:104px;width:1px;height:10.5px;background:#7d8bb8;"></div>
<svg style="left:817px;top:104px" width="10" height="10" viewBox="0 0 10 10"><path d="M8.32 4.26 L9.56 4.40 L9.56 5.60 L8.32 5.74 L7.87 6.82 L8.65 7.80 L7.80 8.65 L6.82 7.87 L5.74 8.32 L5.60 9.56 L4.40 9.56 L4.26 8.32 L3.18 7.87 L2.20 8.65 L1.35 7.80 L2.13 6.82 L1.68 5.74 L0.44 5.60 L0.44 4.40 L1.68 4.26 L2.13 3.18 L1.35 2.20 L2.20 1.35 L3.18 2.13 L4.26 1.68 L4.40 0.44 L5.60 0.44 L5.74 1.68 L6.82 2.13 L7.80 1.35 L8.65 2.20 L7.87 3.18 Z" fill="#fff"/><circle cx="5" cy="5" r="1.5" fill="#122a6b"/></svg>
<svg style="left:828.5px;top:106.5px" width="8" height="5" viewBox="0 0 8 5"><path d="M0.7 0.7 L4.0 4.6 L7.3 0.7" fill="none" stroke="#fff" stroke-width="1.4"/></svg>
<svg style="left:769.5px;top:123px" width="10" height="10" viewBox="0 0 10 10"><path d="M0.3 0.5 L9.7 0.5 L6 4.8 L6 9.5 L4 8.2 L4 4.8 Z" fill="#1b2a5e"/></svg>
<div style="left:781.3px;top:122.65px;font-size:9px;line-height:11.70px;color:#1b2a5e;font-weight:bold;white-space:nowrap;-webkit-text-stroke:0.1px currentColor;"><span id="t67" style="display:inline-block;transform:scale(0.823,0.943);transform-origin:left center;">เลือกลีก</span></div>
<svg style="left:817px;top:124px" width="9" height="9" viewBox="0 0 9 9"><path d="M7.6 4.5 A3.2 3.2 0 1 1 4.5 1.3" fill="none" stroke="#1b2a5e" stroke-width="1.3"/><path d="M3.7 0 L6.4 1.4 L3.7 2.8 Z" fill="#1b2a5e"/></svg>
<div style="left:834px;top:122.97px;font-size:8.5px;line-height:11.05px;color:#1b2a5e;font-weight:bold;white-space:nowrap;"><span id="t68" style="">5</span></div>
<div style="left:200px;top:144px;width:654px;height:22px;background:#122a6b;border-radius:3px 3px 0 0"></div>
<svg style="left:218.6px;top:153.6px" width="8" height="4.4" viewBox="0 0 8 4.4"><path d="M0.7 4.2 L4.0 0.7 L7.3 4.2" fill="none" stroke="#fff" stroke-width="1.5"/></svg>
<div style="left:244.5px;top:151.12px;font-size:7.5px;line-height:9.75px;color:#fff;font-weight:bold;white-space:nowrap;-webkit-text-stroke:0.25px currentColor;"><span id="t69" style="display:inline-block;transform:scale(0.950,0.985);transform-origin:left center;">สด</span></div>
<div style="left:394px;top:144px;width:0.8px;height:22px;background:#2d4280;"></div>
<div style="left:610.5px;top:144px;width:0.8px;height:22px;background:#2d4280;"></div>
<div style="left:786px;top:144px;width:0.8px;height:22px;background:#2d4280;"></div>
<div style="left:821px;top:144px;width:0.8px;height:22px;background:#2d4280;"></div>
<div style="left:394px;top:154px;width:392px;height:0.7px;background:#22397a;"></div>
<div style="left:352.75px;width:300px;text-align:center;top:144.47px;font-size:8.5px;line-height:11.05px;color:#fff;font-weight:bold;white-space:nowrap;-webkit-text-stroke:0.25px currentColor;"><span id="t70" style="display:inline-block;transform:scale(0.815,0.941);transform-origin:center center;">เต็มเวลา</span></div>
<div style="left:549.05px;width:300px;text-align:center;top:144.47px;font-size:8.5px;line-height:11.05px;color:#fff;font-weight:bold;white-space:nowrap;-webkit-text-stroke:0.25px currentColor;"><span id="t71" style="display:inline-block;transform:scale(0.810,0.939);transform-origin:center center;">ครึ่งแรก</span></div>
<div style="left:405px;top:155.60px;font-size:8.3px;line-height:10.79px;color:#fff;font-weight:bold;white-space:nowrap;-webkit-text-stroke:0.2px currentColor;"><span id="t72" style="display:inline-block;transform:scale(0.888,0.965);transform-origin:left center;">ล 1X2</span></div>
<div style="left:314.7px;width:300px;text-align:center;top:155.80px;font-size:8.3px;line-height:10.79px;color:#fff;font-weight:bold;white-space:nowrap;-webkit-text-stroke:0.25px currentColor;"><span id="t73" style="display:inline-block;transform:scale(0.881,0.963);transform-origin:center center;">แฮนดิแคพ</span></div>
<div style="left:381px;width:300px;text-align:center;top:155.80px;font-size:8.3px;line-height:10.79px;color:#fff;font-weight:bold;white-space:nowrap;-webkit-text-stroke:0.25px currentColor;"><span id="t74" style="display:inline-block;transform:scale(0.857,0.955);transform-origin:center center;">สูงกว่า ต่ำกว่า</span></div>
<div style="left:439.4px;width:300px;text-align:center;top:155.80px;font-size:8.3px;line-height:10.79px;color:#fff;font-weight:bold;white-space:nowrap;-webkit-text-stroke:0.2px currentColor;"><span id="t75" style="display:inline-block;transform:scale(0.894,1.0);transform-origin:center center;">1X2</span></div>
<div style="left:490.9px;width:300px;text-align:center;top:155.80px;font-size:8.3px;line-height:10.79px;color:#fff;font-weight:bold;white-space:nowrap;-webkit-text-stroke:0.25px currentColor;"><span id="t76" style="display:inline-block;transform:scale(0.870,0.959);transform-origin:center center;">แฮนดิแคพ</span></div>
<div style="left:557.3px;width:300px;text-align:center;top:155.80px;font-size:8.3px;line-height:10.79px;color:#fff;font-weight:bold;white-space:nowrap;-webkit-text-stroke:0.25px currentColor;"><span id="t77" style="display:inline-block;transform:scale(0.846,0.951);transform-origin:center center;">สูงกว่า ต่ำกว่า</span></div>
<div style="left:615.25px;width:300px;text-align:center;top:155.80px;font-size:8.3px;line-height:10.79px;color:#fff;font-weight:bold;white-space:nowrap;-webkit-text-stroke:0.2px currentColor;"><span id="t78" style="display:inline-block;transform:scale(0.874,1.0);transform-origin:center center;">1X2</span></div>
<div style="left:653.9px;width:300px;text-align:center;top:146.50px;font-size:8.3px;line-height:8.00px;color:#fff;font-weight:bold;white-space:nowrap;-webkit-text-stroke:0.25px currentColor;"><span id="t79" style="display:inline-block;transform:scale(0.944,0.983);transform-origin:center center;">ประตู</span></div>
<div style="left:653.9px;width:300px;text-align:center;top:154.50px;font-size:8.3px;line-height:8.00px;color:#fff;font-weight:bold;white-space:nowrap;-webkit-text-stroke:0.25px currentColor;"><span id="t80" style="display:inline-block;transform:scale(0.895,0.967);transform-origin:center center;">ต่อไป</span></div>
<div style="left:687.25px;width:300px;text-align:center;top:150.10px;font-size:8.3px;line-height:10.79px;color:#fff;font-weight:bold;white-space:nowrap;-webkit-text-stroke:0.25px currentColor;"><span id="t81" style="display:inline-block;transform:scale(0.860,0.956);transform-origin:center center;">อื่นๆ</span></div>
<div style="left:200px;top:166px;width:654px;height:56.5px;background:#f9d6c6;"></div>
<div style="left:394px;top:166px;width:0.8px;height:56.5px;background:#f0cab9;"></div>
<div style="left:610.5px;top:166px;width:0.8px;height:56.5px;background:#f0cab9;"></div>
<div style="left:786px;top:166px;width:0.8px;height:56.5px;background:#f0cab9;"></div>
<div style="left:821px;top:166px;width:0.8px;height:56.5px;background:#f0cab9;"></div>
<div style="left:200px;top:166px;width:654px;height:1px;background:#fdf1ec;"></div>
<div style="left:200px;top:221.5px;width:654px;height:1.2px;background:#fdf1ec;"></div>
<div style="left:394px;top:197.2px;width:427px;height:0.8px;background:#f0cab9;"></div>
<div style="left:200px;top:166.8px;width:50px;height:2.6px;overflow:hidden"><div style="position:absolute;left:13px;top:-6.2px;font-size:8.5px;line-height:10px;font-weight:bold;color:#9a6a58;white-space:nowrap;letter-spacing:0px">1H 12'</div></div>
<svg style="left:246px;top:165.5px" width="9" height="9" viewBox="0 0 9 9"><path d="M4.5 0.6 L5.7 3.2 L8.5 3.4 L6.4 5.3 L7.1 8.2 L4.5 6.7 L1.9 8.2 L2.6 5.3 L0.5 3.4 L3.3 3.2 Z" fill="#fff" stroke="#1b2a5e" stroke-width="0.8"/></svg>
<svg style="left:257.5px;top:165.5px" width="9" height="9" viewBox="0 0 9 9"><circle cx="4.5" cy="4.5" r="4.3" fill="#122a6b"/><path d="M3.5 2.6 L6.5 4.5 L3.5 6.4 Z" fill="#fff"/></svg>
<svg style="left:513.5px;top:182px" width="14" height="4" viewBox="0 0 14 4"><circle cx="2" cy="2" r="1.6" fill="#999"/><circle cx="11" cy="2" r="1.6" fill="#999"/></svg>
<div style="left:200px;top:223.1px;width:654px;height:12px;background:#3a4b92;"></div>
<svg style="left:219px;top:227.1px" width="7.5" height="4.2" viewBox="0 0 7.5 4.2"><path d="M0.7 4.0 L3.75 0.7 L6.8 4.0" fill="none" stroke="#fff" stroke-width="1.4"/></svg>
<svg style="left:245.8px;top:225.4px" width="7" height="7" viewBox="0 0 7 7"><path d="M3.5 0.2 L4.45 2.45 L6.8 2.65 L5.05 4.25 L5.6 6.7 L3.5 5.4 L1.4 6.7 L1.95 4.25 L0.2 2.65 L2.55 2.45 Z" fill="#fff"/></svg>
<div style="left:255.5px;top:224.17px;font-size:8.5px;line-height:11.05px;color:#fff;font-weight:bold;white-space:nowrap;-webkit-text-stroke:0.25px currentColor;"><span id="t82" style="display:inline-block;transform:scale(0.822,0.943);transform-origin:left center;">อิตาลี ซีรีย์ อา</span></div>
<svg style="left:832.5px;top:225.1px" width="8.5" height="8.5" viewBox="0 0 8.5 8.5"><g transform="translate(8.5 0) scale(-1 1)"><path d="M7 4.25 A2.9 2.9 0 1 1 4.25 1.35" fill="none" stroke="#fff" stroke-width="1.2"/><path d="M3.5 0 L6 1.3 L3.5 2.6 Z" fill="#fff"/></g></svg>
<div style="left:200px;top:235px;width:654px;height:114px;background:#fcece5;"></div>
<div style="left:394px;top:235px;width:0.8px;height:114px;background:#f3dace;"></div>
<div style="left:610.5px;top:235px;width:0.8px;height:114px;background:#f3dace;"></div>
<div style="left:786px;top:235px;width:0.8px;height:114px;background:#f3dace;"></div>
<div style="left:821px;top:235px;width:0.8px;height:114px;background:#f3dace;"></div>
<div style="left:394px;top:271px;width:427px;height:0.8px;background:#f3dace;"></div>
<div style="left:394px;top:297px;width:427px;height:0.8px;background:#f3dace;"></div>
<div style="left:394px;top:323px;width:427px;height:0.8px;background:#f3dace;"></div>
<div style="left:200px;top:348.5px;width:654px;height:0.8px;background:#f3dace;"></div>
<div style="left:72.6px;width:300px;text-align:center;top:241.13px;font-size:7.8px;line-height:10.14px;color:#1b2a5e;font-weight:bold;white-space:nowrap;-webkit-text-stroke:0.3px currentColor;"><span id="t83" style="display:inline-block;transform:scale(0.878,1.0);transform-origin:center center;">0 : 0</span></div>
<div style="left:72.75px;width:300px;text-align:center;top:250.80px;font-size:8px;line-height:10.40px;color:#9e3a22;font-weight:bold;white-space:nowrap;-webkit-text-stroke:0.25px currentColor;"><span id="t84" style="display:inline-block;transform:scale(0.942,1.0);transform-origin:center center;">1H 10'</span></div>
<div style="left:245.7px;top:236.78px;font-size:8.5px;line-height:11.05px;color:#d9402b;font-weight:bold;white-space:nowrap;-webkit-text-stroke:0.25px currentColor;"><span id="t85" style="display:inline-block;transform:scale(0.784,0.93);transform-origin:left center;">เจนัว</span></div>
<div style="left:245.7px;top:246.07px;font-size:8.5px;line-height:11.05px;color:#1b2a5e;font-weight:bold;white-space:nowrap;-webkit-text-stroke:0.25px currentColor;"><span id="t86" style="display:inline-block;transform:scale(0.819,0.942);transform-origin:left center;">เฮลลาส เวโรนา</span></div>
<svg style="left:245.5px;top:256px" width="9" height="9" viewBox="0 0 9 9"><path d="M4.5 0.6 L5.7 3.2 L8.5 3.4 L6.4 5.3 L7.1 8.2 L4.5 6.7 L1.9 8.2 L2.6 5.3 L0.5 3.4 L3.3 3.2 Z" fill="#fff" stroke="#1b2a5e" stroke-width="0.8"/></svg>
<svg style="left:257.5px;top:257px" width="9" height="7" viewBox="0 0 9 7"><rect x="0" y="0" width="9" height="7" fill="#1b2a5e"/><path d="M1 1.2 L8 1.2 M1 3.5 L8 3.5 M1 5.8 L8 5.8 M4.5 1 L4.5 6" stroke="#9aa6cf" stroke-width="0.7"/></svg>
<svg style="left:268.5px;top:256.2px" width="8.5" height="8.5" viewBox="0 0 8.5 8.5"><circle cx="4.25" cy="4.25" r="4.1" fill="#122a6b"/><path d="M3.3 2.5 L6.2 4.25 L3.3 6 Z" fill="#fff"/></svg>
<div style="left:462.5px;top:238.5px;width:30.5px;height:8.6px;background:#6e3b1a;"></div>
<div style="left:437.6px;top:237.96px;font-size:7.6px;line-height:9.88px;color:#2a66b0;font-weight:bold;white-space:nowrap;-webkit-text-stroke:0.18px currentColor;"><span id="t87" style="">0-0.5</span></div>
<div style="left:498px;top:237.96px;font-size:7.6px;line-height:9.88px;color:#2a66b0;font-weight:bold;white-space:nowrap;-webkit-text-stroke:0.18px currentColor;"><span id="t88" style="">1.5-2</span></div>
<div style="left:528px;top:237.96px;font-size:7.6px;line-height:9.88px;color:#1e3f8f;font-weight:bold;white-space:nowrap;-webkit-text-stroke:0.18px currentColor;"><span id="t89" style="">O</span></div>
<div style="left:528px;top:248.16px;font-size:7.6px;line-height:9.88px;color:#1e3f8f;font-weight:bold;white-space:nowrap;-webkit-text-stroke:0.18px currentColor;"><span id="t90" style="">U</span></div>
<div style="left:544.5px;top:237.96px;font-size:7.6px;line-height:9.88px;color:#111;font-weight:bold;white-space:nowrap;-webkit-text-stroke:0.18px currentColor;"><span id="t91" style="">1.05</span></div>
<div style="left:544.5px;top:248.16px;font-size:7.6px;line-height:9.88px;color:#111;font-weight:bold;white-space:nowrap;-webkit-text-stroke:0.18px currentColor;"><span id="t92" style="">0.82</span></div>
<div style="left:573.7px;top:237.96px;font-size:7.6px;line-height:9.88px;color:#1e3f8f;font-weight:bold;white-space:nowrap;-webkit-text-stroke:0.18px currentColor;"><span id="t93" style="">1</span></div>
<div style="left:573.7px;top:248.16px;font-size:7.6px;line-height:9.88px;color:#1e3f8f;font-weight:bold;white-space:nowrap;-webkit-text-stroke:0.18px currentColor;"><span id="t94" style="">2</span></div>
<div style="left:573.7px;top:258.26px;font-size:7.6px;line-height:9.88px;color:#1e3f8f;font-weight:bold;white-space:nowrap;-webkit-text-stroke:0.18px currentColor;"><span id="t95" style="">X</span></div>
<div style="left:587.3px;top:237.96px;font-size:7.6px;line-height:9.88px;color:#111;font-weight:bold;white-space:nowrap;-webkit-text-stroke:0.18px currentColor;"><span id="t96" style="">2.27</span></div>
<div style="left:587.3px;top:248.16px;font-size:7.6px;line-height:9.88px;color:#111;font-weight:bold;white-space:nowrap;-webkit-text-stroke:0.18px currentColor;"><span id="t97" style="">4.13</span></div>
<div style="left:587.3px;top:258.26px;font-size:7.6px;line-height:9.88px;color:#111;font-weight:bold;white-space:nowrap;-webkit-text-stroke:0.18px currentColor;"><span id="t98" style="">2.70</span></div>
<div style="left:328px;width:300px;text-align:center;top:237.46px;font-size:7.6px;line-height:9.88px;color:#f5e6da;font-weight:bold;white-space:nowrap;"><span id="t99" style="">0.86</span></div>
<div style="left:472px;top:247.56px;font-size:7.6px;line-height:9.88px;color:#111;font-weight:bold;white-space:nowrap;-webkit-text-stroke:0.18px currentColor;"><span id="t100" style="">1.06</span></div>
<div style="left:614.0px;top:237.96px;font-size:7.6px;line-height:9.88px;color:#2a66b0;font-weight:bold;white-space:nowrap;-webkit-text-stroke:0.18px currentColor;"><span id="t101" style="">0-0.5</span></div>
<div style="left:647.7px;top:237.96px;font-size:7.6px;line-height:9.88px;color:#111;font-weight:bold;white-space:nowrap;-webkit-text-stroke:0.18px currentColor;"><span id="t102" style="">1.47</span></div>
<div style="left:647.7px;top:248.16px;font-size:7.6px;line-height:9.88px;color:#111;font-weight:bold;white-space:nowrap;-webkit-text-stroke:0.18px currentColor;"><span id="t103" style="">0.60</span></div>
<div style="left:673.7px;top:237.96px;font-size:7.6px;line-height:9.88px;color:#2a66b0;font-weight:bold;white-space:nowrap;-webkit-text-stroke:0.18px currentColor;"><span id="t104" style="">0.50</span></div>
<div style="left:703.7px;top:237.96px;font-size:7.6px;line-height:9.88px;color:#1e3f8f;font-weight:bold;white-space:nowrap;-webkit-text-stroke:0.18px currentColor;"><span id="t105" style="">O</span></div>
<div style="left:703.7px;top:248.16px;font-size:7.6px;line-height:9.88px;color:#1e3f8f;font-weight:bold;white-space:nowrap;-webkit-text-stroke:0.18px currentColor;"><span id="t106" style="">U</span></div>
<div style="left:720.7px;top:237.96px;font-size:7.6px;line-height:9.88px;color:#111;font-weight:bold;white-space:nowrap;-webkit-text-stroke:0.18px currentColor;"><span id="t107" style="">0.89</span></div>
<div style="left:720.7px;top:248.16px;font-size:7.6px;line-height:9.88px;color:#111;font-weight:bold;white-space:nowrap;-webkit-text-stroke:0.18px currentColor;"><span id="t108" style="">0.98</span></div>
<div style="left:748.7px;top:237.96px;font-size:7.6px;line-height:9.88px;color:#1e3f8f;font-weight:bold;white-space:nowrap;-webkit-text-stroke:0.18px currentColor;"><span id="t109" style="">1</span></div>
<div style="left:748.7px;top:248.16px;font-size:7.6px;line-height:9.88px;color:#1e3f8f;font-weight:bold;white-space:nowrap;-webkit-text-stroke:0.18px currentColor;"><span id="t110" style="">2</span></div>
<div style="left:748.7px;top:258.26px;font-size:7.6px;line-height:9.88px;color:#1e3f8f;font-weight:bold;white-space:nowrap;-webkit-text-stroke:0.18px currentColor;"><span id="t111" style="">X</span></div>
<div style="left:763.8px;top:237.96px;font-size:7.6px;line-height:9.88px;color:#111;font-weight:bold;white-space:nowrap;-webkit-text-stroke:0.18px currentColor;"><span id="t112" style="">3.32</span></div>
<div style="left:763.8px;top:248.16px;font-size:7.6px;line-height:9.88px;color:#111;font-weight:bold;white-space:nowrap;-webkit-text-stroke:0.18px currentColor;"><span id="t113" style="">5.00</span></div>
<div style="left:763.8px;top:258.26px;font-size:7.6px;line-height:9.88px;color:#111;font-weight:bold;white-space:nowrap;-webkit-text-stroke:0.18px currentColor;"><span id="t114" style="">1.72</span></div>
<div style="left:796px;top:238.26px;font-size:7.6px;line-height:9.88px;color:#111;font-weight:bold;white-space:nowrap;-webkit-text-stroke:0.18px currentColor;"><span id="t115" style="">0.57</span></div>
<div style="left:796px;top:248.36px;font-size:7.6px;line-height:9.88px;color:#111;font-weight:bold;white-space:nowrap;-webkit-text-stroke:0.18px currentColor;"><span id="t116" style="">1.49</span></div>
<svg style="left:828.3px;top:249.5px" width="7.5" height="7.5" viewBox="0 0 7.5 7.5"><path d="M3.75 0.2 L3.75 7.3 M0.2 3.75 L7.3 3.75" stroke="#1b2a5e" stroke-width="1.35"/></svg>
<div style="left:839px;top:248.56px;font-size:7.6px;line-height:9.88px;color:#1b2a5e;font-weight:bold;white-space:nowrap;"><span id="t117" style="">15</span></div>
<div style="left:437.6px;top:273.96px;font-size:7.6px;line-height:9.88px;color:#2a66b0;font-weight:bold;white-space:nowrap;-webkit-text-stroke:0.18px currentColor;"><span id="t118" style="">0.50</span></div>
<div style="left:472px;top:273.96px;font-size:7.6px;line-height:9.88px;color:#111;font-weight:bold;white-space:nowrap;-webkit-text-stroke:0.18px currentColor;"><span id="t119" style="">1.28</span></div>
<div style="left:472px;top:284.16px;font-size:7.6px;line-height:9.88px;color:#111;font-weight:bold;white-space:nowrap;-webkit-text-stroke:0.18px currentColor;"><span id="t120" style="">0.70</span></div>
<div style="left:498px;top:273.96px;font-size:7.6px;line-height:9.88px;color:#2a66b0;font-weight:bold;white-space:nowrap;-webkit-text-stroke:0.18px currentColor;"><span id="t121" style="">1.50</span></div>
<div style="left:528px;top:273.96px;font-size:7.6px;line-height:9.88px;color:#1e3f8f;font-weight:bold;white-space:nowrap;-webkit-text-stroke:0.18px currentColor;"><span id="t122" style="">O</span></div>
<div style="left:528px;top:284.16px;font-size:7.6px;line-height:9.88px;color:#1e3f8f;font-weight:bold;white-space:nowrap;-webkit-text-stroke:0.18px currentColor;"><span id="t123" style="">U</span></div>
<div style="left:544.5px;top:273.96px;font-size:7.6px;line-height:9.88px;color:#111;font-weight:bold;white-space:nowrap;-webkit-text-stroke:0.18px currentColor;"><span id="t124" style="">0.77</span></div>
<div style="left:544.5px;top:284.16px;font-size:7.6px;line-height:9.88px;color:#111;font-weight:bold;white-space:nowrap;-webkit-text-stroke:0.18px currentColor;"><span id="t125" style="">1.11</span></div>
<div style="left:614.0px;top:273.96px;font-size:7.6px;line-height:9.88px;color:#2a66b0;font-weight:bold;white-space:nowrap;-webkit-text-stroke:0.18px currentColor;"><span id="t126" style="">0.0</span></div>
<div style="left:647.7px;top:273.96px;font-size:7.6px;line-height:9.88px;color:#111;font-weight:bold;white-space:nowrap;-webkit-text-stroke:0.18px currentColor;"><span id="t127" style="">0.52</span></div>
<div style="left:647.7px;top:284.16px;font-size:7.6px;line-height:9.88px;color:#111;font-weight:bold;white-space:nowrap;-webkit-text-stroke:0.18px currentColor;"><span id="t128" style="">1.66</span></div>
<div style="left:673.7px;top:273.96px;font-size:7.6px;line-height:9.88px;color:#2a66b0;font-weight:bold;white-space:nowrap;-webkit-text-stroke:0.18px currentColor;"><span id="t129" style="">0.5-1</span></div>
<div style="left:703.7px;top:273.96px;font-size:7.6px;line-height:9.88px;color:#1e3f8f;font-weight:bold;white-space:nowrap;-webkit-text-stroke:0.18px currentColor;"><span id="t130" style="">O</span></div>
<div style="left:703.7px;top:284.16px;font-size:7.6px;line-height:9.88px;color:#1e3f8f;font-weight:bold;white-space:nowrap;-webkit-text-stroke:0.18px currentColor;"><span id="t131" style="">U</span></div>
<div style="left:720.7px;top:273.96px;font-size:7.6px;line-height:9.88px;color:#111;font-weight:bold;white-space:nowrap;-webkit-text-stroke:0.18px currentColor;"><span id="t132" style="">1.25</span></div>
<div style="left:720.7px;top:284.16px;font-size:7.6px;line-height:9.88px;color:#111;font-weight:bold;white-space:nowrap;-webkit-text-stroke:0.18px currentColor;"><span id="t133" style="">0.67</span></div>
<div style="left:437.6px;top:299.96px;font-size:7.6px;line-height:9.88px;color:#2a66b0;font-weight:bold;white-space:nowrap;-webkit-text-stroke:0.18px currentColor;"><span id="t134" style="">0.5-1</span></div>
<div style="left:472px;top:299.96px;font-size:7.6px;line-height:9.88px;color:#111;font-weight:bold;white-space:nowrap;-webkit-text-stroke:0.18px currentColor;"><span id="t135" style="">1.72</span></div>
<div style="left:472px;top:310.16px;font-size:7.6px;line-height:9.88px;color:#111;font-weight:bold;white-space:nowrap;-webkit-text-stroke:0.18px currentColor;"><span id="t136" style="">0.50</span></div>
<div style="left:498px;top:299.96px;font-size:7.6px;line-height:9.88px;color:#2a66b0;font-weight:bold;white-space:nowrap;-webkit-text-stroke:0.18px currentColor;"><span id="t137" style="">1-1.5</span></div>
<div style="left:528px;top:299.96px;font-size:7.6px;line-height:9.88px;color:#1e3f8f;font-weight:bold;white-space:nowrap;-webkit-text-stroke:0.18px currentColor;"><span id="t138" style="">O</span></div>
<div style="left:528px;top:310.16px;font-size:7.6px;line-height:9.88px;color:#1e3f8f;font-weight:bold;white-space:nowrap;-webkit-text-stroke:0.18px currentColor;"><span id="t139" style="">U</span></div>
<div style="left:544.5px;top:299.96px;font-size:7.6px;line-height:9.88px;color:#111;font-weight:bold;white-space:nowrap;-webkit-text-stroke:0.18px currentColor;"><span id="t140" style="">0.52</span></div>
<div style="left:544.5px;top:310.16px;font-size:7.6px;line-height:9.88px;color:#111;font-weight:bold;white-space:nowrap;-webkit-text-stroke:0.18px currentColor;"><span id="t141" style="">1.53</span></div>
<div style="left:614.0px;top:299.96px;font-size:7.6px;line-height:9.88px;color:#2a66b0;font-weight:bold;white-space:nowrap;-webkit-text-stroke:0.18px currentColor;"><span id="t142" style="">0.50</span></div>
<div style="left:647.7px;top:299.96px;font-size:7.6px;line-height:9.88px;color:#111;font-weight:bold;white-space:nowrap;-webkit-text-stroke:0.18px currentColor;"><span id="t143" style="">2.32</span></div>
<div style="left:647.7px;top:310.16px;font-size:7.6px;line-height:9.88px;color:#111;font-weight:bold;white-space:nowrap;-webkit-text-stroke:0.18px currentColor;"><span id="t144" style="">0.35</span></div>
<div style="left:673.7px;top:299.96px;font-size:7.6px;line-height:9.88px;color:#2a66b0;font-weight:bold;white-space:nowrap;-webkit-text-stroke:0.18px currentColor;"><span id="t145" style="">1.0</span></div>
<div style="left:703.7px;top:299.96px;font-size:7.6px;line-height:9.88px;color:#1e3f8f;font-weight:bold;white-space:nowrap;-webkit-text-stroke:0.18px currentColor;"><span id="t146" style="">O</span></div>
<div style="left:703.7px;top:310.16px;font-size:7.6px;line-height:9.88px;color:#1e3f8f;font-weight:bold;white-space:nowrap;-webkit-text-stroke:0.18px currentColor;"><span id="t147" style="">U</span></div>
<div style="left:720.7px;top:299.96px;font-size:7.6px;line-height:9.88px;color:#111;font-weight:bold;white-space:nowrap;-webkit-text-stroke:0.18px currentColor;"><span id="t148" style="">2.43</span></div>
<div style="left:720.7px;top:310.16px;font-size:7.6px;line-height:9.88px;color:#111;font-weight:bold;white-space:nowrap;-webkit-text-stroke:0.18px currentColor;"><span id="t149" style="">0.28</span></div>
<div style="left:437.6px;top:325.96px;font-size:7.6px;line-height:9.88px;color:#2a66b0;font-weight:bold;white-space:nowrap;-webkit-text-stroke:0.18px currentColor;"><span id="t150" style="">0.0</span></div>
<div style="left:472px;top:325.96px;font-size:7.6px;line-height:9.88px;color:#111;font-weight:bold;white-space:nowrap;-webkit-text-stroke:0.18px currentColor;"><span id="t151" style="">0.47</span></div>
<div style="left:472px;top:336.16px;font-size:7.6px;line-height:9.88px;color:#111;font-weight:bold;white-space:nowrap;-webkit-text-stroke:0.18px currentColor;"><span id="t152" style="">1.81</span></div>
<div style="left:498px;top:325.96px;font-size:7.6px;line-height:9.88px;color:#2a66b0;font-weight:bold;white-space:nowrap;-webkit-text-stroke:0.18px currentColor;"><span id="t153" style="">2.0</span></div>
<div style="left:528px;top:325.96px;font-size:7.6px;line-height:9.88px;color:#1e3f8f;font-weight:bold;white-space:nowrap;-webkit-text-stroke:0.18px currentColor;"><span id="t154" style="">O</span></div>
<div style="left:528px;top:336.16px;font-size:7.6px;line-height:9.88px;color:#1e3f8f;font-weight:bold;white-space:nowrap;-webkit-text-stroke:0.18px currentColor;"><span id="t155" style="">U</span></div>
<div style="left:544.5px;top:325.96px;font-size:7.6px;line-height:9.88px;color:#111;font-weight:bold;white-space:nowrap;-webkit-text-stroke:0.18px currentColor;"><span id="t156" style="">1.51</span></div>
<div style="left:544.5px;top:336.16px;font-size:7.6px;line-height:9.88px;color:#111;font-weight:bold;white-space:nowrap;-webkit-text-stroke:0.18px currentColor;"><span id="t157" style="">0.53</span></div>
<div style="left:200px;top:349.3px;width:654px;height:34px;background:#f7d2c2;background:linear-gradient(#f8d5c6,#f5cbb9)"></div>
<div style="left:394px;top:349.3px;width:0.8px;height:47px;background:#f0cab9;"></div>
<div style="left:610.5px;top:349.3px;width:0.8px;height:47px;background:#f0cab9;"></div>
<div style="left:786px;top:349.3px;width:0.8px;height:47px;background:#f0cab9;"></div>
<div style="left:821px;top:349.3px;width:0.8px;height:47px;background:#f0cab9;"></div>
<div style="left:72.6px;width:300px;text-align:center;top:355.13px;font-size:7.8px;line-height:10.14px;color:#1b2a5e;font-weight:bold;white-space:nowrap;-webkit-text-stroke:0.3px currentColor;"><span id="t158" style="display:inline-block;transform:scale(0.878,1.0);transform-origin:center center;">0 : 1</span></div>
<div style="left:72.75px;width:300px;text-align:center;top:364.80px;font-size:8px;line-height:10.40px;color:#a8482a;font-weight:bold;white-space:nowrap;-webkit-text-stroke:0.25px currentColor;"><span id="t159" style="display:inline-block;transform:scale(0.960,1.0);transform-origin:center center;">1H 11'</span></div>
<div style="left:245.7px;top:350.78px;font-size:8.5px;line-height:11.05px;color:#1b2a5e;font-weight:bold;white-space:nowrap;-webkit-text-stroke:0.25px currentColor;"><span id="t160" style="display:inline-block;transform:scale(0.826,0.944);transform-origin:left center;">ปาร์มา กัลโช่</span></div>
<div style="left:245.7px;top:360.08px;font-size:8.5px;line-height:11.05px;color:#1b2a5e;font-weight:bold;white-space:nowrap;-webkit-text-stroke:0.25px currentColor;"><span id="t161" style="display:inline-block;transform:scale(0.838,0.948);transform-origin:left center;">อูดิเนเซ่</span></div>
<svg style="left:245.5px;top:370px" width="9" height="9" viewBox="0 0 9 9"><path d="M4.5 0.6 L5.7 3.2 L8.5 3.4 L6.4 5.3 L7.1 8.2 L4.5 6.7 L1.9 8.2 L2.6 5.3 L0.5 3.4 L3.3 3.2 Z" fill="#fff" stroke="#1b2a5e" stroke-width="0.8"/></svg>
<svg style="left:257.5px;top:371px" width="9" height="7" viewBox="0 0 9 7"><rect x="0" y="0" width="9" height="7" fill="#1b2a5e"/><path d="M1 1.2 L8 1.2 M1 3.5 L8 3.5 M1 5.8 L8 5.8 M4.5 1 L4.5 6" stroke="#9aa6cf" stroke-width="0.7"/></svg>
<svg style="left:268.5px;top:370.2px" width="8.5" height="8.5" viewBox="0 0 8.5 8.5"><circle cx="4.25" cy="4.25" r="4.1" fill="#122a6b"/><path d="M3.3 2.5 L6.2 4.25 L3.3 6 Z" fill="#fff"/></svg>
<div style="left:437.6px;top:351.96px;font-size:7.6px;line-height:9.88px;color:#2a66b0;font-weight:bold;white-space:nowrap;-webkit-text-stroke:0.18px currentColor;"><span id="t162" style="">0.0</span></div>
<div style="left:472px;top:351.96px;font-size:7.6px;line-height:9.88px;color:#111;font-weight:bold;white-space:nowrap;-webkit-text-stroke:0.18px currentColor;"><span id="t163" style="">0.82</span></div>
<div style="left:472px;top:362.16px;font-size:7.6px;line-height:9.88px;color:#111;font-weight:bold;white-space:nowrap;-webkit-text-stroke:0.18px currentColor;"><span id="t164" style="">1.11</span></div>
<svg style="left:828.3px;top:362.7px" width="7.5" height="7.5" viewBox="0 0 7.5 7.5"><path d="M3.75 0.2 L3.75 7.3 M0.2 3.75 L7.3 3.75" stroke="#1b2a5e" stroke-width="1.35"/></svg>
<div style="left:839px;top:361.46px;font-size:7.6px;line-height:9.88px;color:#1b2a5e;font-weight:bold;white-space:nowrap;"><span id="t165" style="">11</span></div>
<div style="left:200px;top:380.5px;width:654px;height:16px;background:#f2bda6;background:linear-gradient(#f5cab8,#f2bba6 35%,#eeae98 70%,#eeac96)"></div>
<div style="left:205.4px;top:385.11px;font-size:8.3px;line-height:10.79px;color:#1b2a5e;font-weight:bold;white-space:nowrap;-webkit-text-stroke:0.25px currentColor;"><span id="t166" style="display:inline-block;transform:scale(0.911,0.972);transform-origin:left center;">ลูกเตะมุมทั้งหมด</span></div>
<div style="left:200px;top:396.5px;width:654px;height:35px;background:#fcece5;"></div>
<div style="left:394px;top:396.5px;width:0.8px;height:35px;background:#f3dace;"></div>
<div style="left:610.5px;top:396.5px;width:0.8px;height:35px;background:#f3dace;"></div>
<div style="left:786px;top:396.5px;width:0.8px;height:35px;background:#f3dace;"></div>
<div style="left:821px;top:396.5px;width:0.8px;height:35px;background:#f3dace;"></div>
<div style="left:72.6px;width:300px;text-align:center;top:402.63px;font-size:7.8px;line-height:10.14px;color:#1b2a5e;font-weight:bold;white-space:nowrap;-webkit-text-stroke:0.3px currentColor;"><span id="t167" style="display:inline-block;transform:scale(0.878,1.0);transform-origin:center center;">0 : 2</span></div>
<div style="left:72.75px;width:300px;text-align:center;top:412.30px;font-size:8px;line-height:10.40px;color:#a8482a;font-weight:bold;white-space:nowrap;-webkit-text-stroke:0.25px currentColor;"><span id="t168" style="display:inline-block;transform:scale(0.942,1.0);transform-origin:center center;">1H 10'</span></div>
<div style="left:245.7px;top:398.28px;font-size:8.5px;line-height:11.05px;color:#1b2a5e;font-weight:bold;white-space:nowrap;-webkit-text-stroke:0.25px currentColor;"><span id="t169" style="display:inline-block;transform:scale(0.784,0.93);transform-origin:left center;">เจนัว</span></div>
<div style="left:245.7px;top:407.58px;font-size:8.5px;line-height:11.05px;color:#1b2a5e;font-weight:bold;white-space:nowrap;-webkit-text-stroke:0.25px currentColor;"><span id="t170" style="display:inline-block;transform:scale(0.819,0.942);transform-origin:left center;">เฮลลาส เวโรนา</span></div>
<svg style="left:245.5px;top:417.5px" width="9" height="9" viewBox="0 0 9 9"><path d="M4.5 0.6 L5.7 3.2 L8.5 3.4 L6.4 5.3 L7.1 8.2 L4.5 6.7 L1.9 8.2 L2.6 5.3 L0.5 3.4 L3.3 3.2 Z" fill="#fff" stroke="#1b2a5e" stroke-width="0.8"/></svg>
<div style="left:200px;top:431.5px;width:654px;height:34px;background:#f7d2c2;"></div>
<div style="left:394px;top:431.5px;width:0.8px;height:34px;background:#f0cab9;"></div>
<div style="left:610.5px;top:431.5px;width:0.8px;height:34px;background:#f0cab9;"></div>
<div style="left:786px;top:431.5px;width:0.8px;height:34px;background:#f0cab9;"></div>
<div style="left:821px;top:431.5px;width:0.8px;height:34px;background:#f0cab9;"></div>
<div style="left:72.6px;width:300px;text-align:center;top:437.63px;font-size:7.8px;line-height:10.14px;color:#1b2a5e;font-weight:bold;white-space:nowrap;-webkit-text-stroke:0.3px currentColor;"><span id="t171" style="display:inline-block;transform:scale(0.878,1.0);transform-origin:center center;">0 : 0</span></div>
<div style="left:72.75px;width:300px;text-align:center;top:447.30px;font-size:8px;line-height:10.40px;color:#a8482a;font-weight:bold;white-space:nowrap;-webkit-text-stroke:0.25px currentColor;"><span id="t172" style="display:inline-block;transform:scale(0.960,1.0);transform-origin:center center;">1H 11'</span></div>
<div style="left:245.7px;top:433.28px;font-size:8.5px;line-height:11.05px;color:#1b2a5e;font-weight:bold;white-space:nowrap;-webkit-text-stroke:0.25px currentColor;"><span id="t173" style="display:inline-block;transform:scale(0.826,0.944);transform-origin:left center;">ปาร์มา กัลโช่</span></div>
<div style="left:245.7px;top:442.58px;font-size:8.5px;line-height:11.05px;color:#1b2a5e;font-weight:bold;white-space:nowrap;-webkit-text-stroke:0.25px currentColor;"><span id="t174" style="display:inline-block;transform:scale(0.838,0.948);transform-origin:left center;">อูดิเนเซ่</span></div>
<svg style="left:245.5px;top:452.5px" width="9" height="9" viewBox="0 0 9 9"><path d="M4.5 0.6 L5.7 3.2 L8.5 3.4 L6.4 5.3 L7.1 8.2 L4.5 6.7 L1.9 8.2 L2.6 5.3 L0.5 3.4 L3.3 3.2 Z" fill="#fff" stroke="#1b2a5e" stroke-width="0.8"/></svg>
<div style="left:200px;top:466.1px;width:654px;height:12px;background:#3a4b92;"></div>
<svg style="left:219px;top:470.1px" width="7.5" height="4.2" viewBox="0 0 7.5 4.2"><path d="M0.7 4.0 L3.75 0.7 L6.8 4.0" fill="none" stroke="#fff" stroke-width="1.4"/></svg>
<svg style="left:245.8px;top:468.4px" width="7" height="7" viewBox="0 0 7 7"><path d="M3.5 0.2 L4.45 2.45 L6.8 2.65 L5.05 4.25 L5.6 6.7 L3.5 5.4 L1.4 6.7 L1.95 4.25 L0.2 2.65 L2.55 2.45 Z" fill="#fff"/></svg>
<div style="left:255.5px;top:467.18px;font-size:8.5px;line-height:11.05px;color:#fff;font-weight:bold;white-space:nowrap;-webkit-text-stroke:0.25px currentColor;"><span id="t175" style="display:inline-block;transform:scale(0.862,0.956);transform-origin:left center;">สเปน ลา ลีกา</span></div>
<svg style="left:832.5px;top:468.1px" width="8.5" height="8.5" viewBox="0 0 8.5 8.5"><g transform="translate(8.5 0) scale(-1 1)"><path d="M7 4.25 A2.9 2.9 0 1 1 4.25 1.35" fill="none" stroke="#fff" stroke-width="1.2"/><path d="M3.5 0 L6 1.3 L3.5 2.6 Z" fill="#fff"/></g></svg>
<div style="left:200px;top:478px;width:654px;height:91px;background:#fcece5;"></div>
<div style="left:394px;top:478px;width:0.8px;height:91px;background:#f3dace;"></div>
<div style="left:610.5px;top:478px;width:0.8px;height:91px;background:#f3dace;"></div>
<div style="left:786px;top:478px;width:0.8px;height:91px;background:#f3dace;"></div>
<div style="left:821px;top:478px;width:0.8px;height:91px;background:#f3dace;"></div>
<div style="left:394px;top:514px;width:427px;height:0.8px;background:#f3dace;"></div>
<div style="left:394px;top:540px;width:427px;height:0.8px;background:#f3dace;"></div>
<div style="left:394px;top:565.5px;width:427px;height:0.8px;background:#f3dace;"></div>
<div style="left:72.6px;width:300px;text-align:center;top:484.13px;font-size:7.8px;line-height:10.14px;color:#1b2a5e;font-weight:bold;white-space:nowrap;-webkit-text-stroke:0.3px currentColor;"><span id="t176" style="display:inline-block;transform:scale(0.878,1.0);transform-origin:center center;">0 : 0</span></div>
<div style="left:72.75px;width:300px;text-align:center;top:493.80px;font-size:8px;line-height:10.40px;color:#a8482a;font-weight:bold;white-space:nowrap;-webkit-text-stroke:0.25px currentColor;"><span id="t177" style="display:inline-block;transform:scale(1.010,1.0);transform-origin:center center;">2H 7'</span></div>
<div style="left:245.7px;top:479.78px;font-size:8.5px;line-height:11.05px;color:#1b2a5e;font-weight:bold;white-space:nowrap;-webkit-text-stroke:0.25px currentColor;"><span id="t178" style="display:inline-block;transform:scale(0.822,0.943);transform-origin:left center;">มายอร์ก้า</span></div>
<div style="left:245.7px;top:489.08px;font-size:8.5px;line-height:11.05px;color:#1b2a5e;font-weight:bold;white-space:nowrap;-webkit-text-stroke:0.25px currentColor;"><span id="t179" style="display:inline-block;transform:scale(0.766,0.923);transform-origin:left center;">โอซาซูน่า</span></div>
<svg style="left:245.5px;top:499px" width="9" height="9" viewBox="0 0 9 9"><path d="M4.5 0.6 L5.7 3.2 L8.5 3.4 L6.4 5.3 L7.1 8.2 L4.5 6.7 L1.9 8.2 L2.6 5.3 L0.5 3.4 L3.3 3.2 Z" fill="#fff" stroke="#1b2a5e" stroke-width="0.8"/></svg>
<svg style="left:257.5px;top:500px" width="9" height="7" viewBox="0 0 9 7"><rect x="0" y="0" width="9" height="7" fill="#1b2a5e"/><path d="M1 1.2 L8 1.2 M1 3.5 L8 3.5 M1 5.8 L8 5.8 M4.5 1 L4.5 6" stroke="#9aa6cf" stroke-width="0.7"/></svg>
<svg style="left:268.5px;top:499.2px" width="8.5" height="8.5" viewBox="0 0 8.5 8.5"><circle cx="4.25" cy="4.25" r="4.1" fill="#122a6b"/><path d="M3.3 2.5 L6.2 4.25 L3.3 6 Z" fill="#fff"/></svg>
<div style="left:437.6px;top:480.96px;font-size:7.6px;line-height:9.88px;color:#2a66b0;font-weight:bold;white-space:nowrap;-webkit-text-stroke:0.18px currentColor;"><span id="t180" style="">0.0</span></div>
<div style="left:472px;top:480.96px;font-size:7.6px;line-height:9.88px;color:#111;font-weight:bold;white-space:nowrap;-webkit-text-stroke:0.18px currentColor;"><span id="t181" style="">0.86</span></div>
<div style="left:472px;top:491.16px;font-size:7.6px;line-height:9.88px;color:#111;font-weight:bold;white-space:nowrap;-webkit-text-stroke:0.18px currentColor;"><span id="t182" style="">1.04</span></div>
<div style="left:498px;top:480.96px;font-size:7.6px;line-height:9.88px;color:#2a66b0;font-weight:bold;white-space:nowrap;-webkit-text-stroke:0.18px currentColor;"><span id="t183" style="">0.5-1</span></div>
<div style="left:528px;top:480.96px;font-size:7.6px;line-height:9.88px;color:#1e3f8f;font-weight:bold;white-space:nowrap;-webkit-text-stroke:0.18px currentColor;"><span id="t184" style="">O</span></div>
<div style="left:528px;top:491.16px;font-size:7.6px;line-height:9.88px;color:#1e3f8f;font-weight:bold;white-space:nowrap;-webkit-text-stroke:0.18px currentColor;"><span id="t185" style="">U</span></div>
<div style="left:544.5px;top:480.96px;font-size:7.6px;line-height:9.88px;color:#111;font-weight:bold;white-space:nowrap;-webkit-text-stroke:0.18px currentColor;"><span id="t186" style="">0.78</span></div>
<div style="left:544.5px;top:491.16px;font-size:7.6px;line-height:9.88px;color:#111;font-weight:bold;white-space:nowrap;-webkit-text-stroke:0.18px currentColor;"><span id="t187" style="">1.09</span></div>
<div style="left:573.7px;top:480.96px;font-size:7.6px;line-height:9.88px;color:#1e3f8f;font-weight:bold;white-space:nowrap;-webkit-text-stroke:0.18px currentColor;"><span id="t188" style="">1</span></div>
<div style="left:573.7px;top:491.16px;font-size:7.6px;line-height:9.88px;color:#1e3f8f;font-weight:bold;white-space:nowrap;-webkit-text-stroke:0.18px currentColor;"><span id="t189" style="">2</span></div>
<div style="left:573.7px;top:501.26px;font-size:7.6px;line-height:9.88px;color:#1e3f8f;font-weight:bold;white-space:nowrap;-webkit-text-stroke:0.18px currentColor;"><span id="t190" style="">X</span></div>
<div style="left:587.3px;top:480.96px;font-size:7.6px;line-height:9.88px;color:#111;font-weight:bold;white-space:nowrap;-webkit-text-stroke:0.18px currentColor;"><span id="t191" style="">3.38</span></div>
<div style="left:587.3px;top:491.16px;font-size:7.6px;line-height:9.88px;color:#111;font-weight:bold;white-space:nowrap;-webkit-text-stroke:0.18px currentColor;"><span id="t192" style="">3.79</span></div>
<div style="left:587.3px;top:501.26px;font-size:7.6px;line-height:9.88px;color:#111;font-weight:bold;white-space:nowrap;-webkit-text-stroke:0.18px currentColor;"><span id="t193" style="">2.03</span></div>
<div style="left:796px;top:481.06px;font-size:7.6px;line-height:9.88px;color:#111;font-weight:bold;white-space:nowrap;-webkit-text-stroke:0.18px currentColor;"><span id="t194" style="">0.90</span></div>
<div style="left:796px;top:491.16px;font-size:7.6px;line-height:9.88px;color:#111;font-weight:bold;white-space:nowrap;-webkit-text-stroke:0.18px currentColor;"><span id="t195" style="">1.00</span></div>
<svg style="left:828.3px;top:492.3px" width="7.5" height="7.5" viewBox="0 0 7.5 7.5"><path d="M3.75 0.2 L3.75 7.3 M0.2 3.75 L7.3 3.75" stroke="#1b2a5e" stroke-width="1.35"/></svg>
<div style="left:839px;top:491.26px;font-size:7.6px;line-height:9.88px;color:#1b2a5e;font-weight:bold;white-space:nowrap;"><span id="t196" style="">14</span></div>
<div style="left:437.6px;top:516.96px;font-size:7.6px;line-height:9.88px;color:#2a66b0;font-weight:bold;white-space:nowrap;-webkit-text-stroke:0.18px currentColor;"><span id="t197" style="">0-0.5</span></div>
<div style="left:472px;top:516.96px;font-size:7.6px;line-height:9.88px;color:#111;font-weight:bold;white-space:nowrap;-webkit-text-stroke:0.18px currentColor;"><span id="t198" style="">1.66</span></div>
<div style="left:472px;top:527.16px;font-size:7.6px;line-height:9.88px;color:#111;font-weight:bold;white-space:nowrap;-webkit-text-stroke:0.18px currentColor;"><span id="t199" style="">0.50</span></div>
<div style="left:498px;top:516.96px;font-size:7.6px;line-height:9.88px;color:#2a66b0;font-weight:bold;white-space:nowrap;-webkit-text-stroke:0.18px currentColor;"><span id="t200" style="">1.0</span></div>
<div style="left:528px;top:516.96px;font-size:7.6px;line-height:9.88px;color:#1e3f8f;font-weight:bold;white-space:nowrap;-webkit-text-stroke:0.18px currentColor;"><span id="t201" style="">O</span></div>
<div style="left:528px;top:527.16px;font-size:7.6px;line-height:9.88px;color:#1e3f8f;font-weight:bold;white-space:nowrap;-webkit-text-stroke:0.18px currentColor;"><span id="t202" style="">U</span></div>
<div style="left:544.5px;top:516.96px;font-size:7.6px;line-height:9.88px;color:#111;font-weight:bold;white-space:nowrap;-webkit-text-stroke:0.18px currentColor;"><span id="t203" style="">1.36</span></div>
<div style="left:544.5px;top:527.16px;font-size:7.6px;line-height:9.88px;color:#111;font-weight:bold;white-space:nowrap;-webkit-text-stroke:0.18px currentColor;"><span id="t204" style="">0.60</span></div>
<div style="left:437.6px;top:553.16px;font-size:7.6px;line-height:9.88px;color:#2a66b0;font-weight:bold;white-space:nowrap;-webkit-text-stroke:0.18px currentColor;"><span id="t205" style="">0-0.5</span></div>
<div style="left:472px;top:542.96px;font-size:7.6px;line-height:9.88px;color:#111;font-weight:bold;white-space:nowrap;-webkit-text-stroke:0.18px currentColor;"><span id="t206" style="">0.42</span></div>
<div style="left:472px;top:553.16px;font-size:7.6px;line-height:9.88px;color:#111;font-weight:bold;white-space:nowrap;-webkit-text-stroke:0.18px currentColor;"><span id="t207" style="">1.92</span></div>
<div style="left:498px;top:542.96px;font-size:7.6px;line-height:9.88px;color:#2a66b0;font-weight:bold;white-space:nowrap;-webkit-text-stroke:0.18px currentColor;"><span id="t208" style="">0.50</span></div>
<div style="left:528px;top:542.96px;font-size:7.6px;line-height:9.88px;color:#1e3f8f;font-weight:bold;white-space:nowrap;-webkit-text-stroke:0.18px currentColor;"><span id="t209" style="">O</span></div>
<div style="left:528px;top:553.16px;font-size:7.6px;line-height:9.88px;color:#1e3f8f;font-weight:bold;white-space:nowrap;-webkit-text-stroke:0.18px currentColor;"><span id="t210" style="">U</span></div>
<div style="left:544.5px;top:542.96px;font-size:7.6px;line-height:9.88px;color:#111;font-weight:bold;white-space:nowrap;-webkit-text-stroke:0.18px currentColor;"><span id="t211" style="">0.55</span></div>
<div style="left:544.5px;top:553.16px;font-size:7.6px;line-height:9.88px;color:#111;font-weight:bold;white-space:nowrap;-webkit-text-stroke:0.18px currentColor;"><span id="t212" style="">1.47</span></div>
</body></html>
